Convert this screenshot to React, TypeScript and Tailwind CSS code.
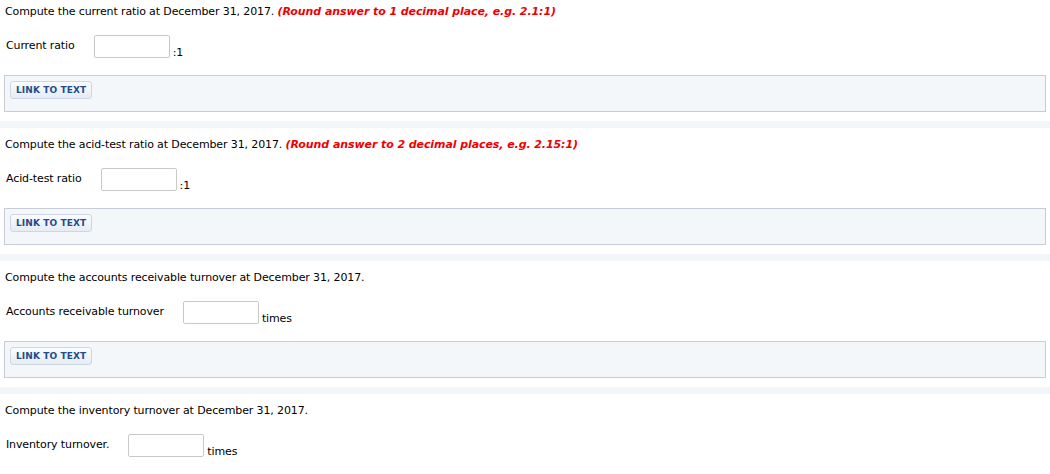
import React from 'react';

type Question = {
  prompt: string;
  hint?: string;
  label: string;
  suffix: string;
  link: boolean;
};

const questions: Question[] = [
  {
    prompt: 'Compute the current ratio at December 31, 2017.',
    hint: '(Round answer to 1 decimal place, e.g. 2.1:1)',
    label: 'Current ratio',
    suffix: ':1',
    link: true,
  },
  {
    prompt: 'Compute the acid-test ratio at December 31, 2017.',
    hint: '(Round answer to 2 decimal places, e.g. 2.15:1)',
    label: 'Acid-test ratio',
    suffix: ':1',
    link: true,
  },
  {
    prompt: 'Compute the accounts receivable turnover at December 31, 2017.',
    label: 'Accounts receivable turnover',
    suffix: 'times',
    link: true,
  },
  {
    prompt: 'Compute the inventory turnover at December 31, 2017.',
    label: 'Inventory turnover.',
    suffix: 'times',
    link: false,
  },
];

const QuestionBlock: React.FC<{ q: Question; first: boolean }> = ({ q, first }) => (
  <div>
    {!first && <div className="h-[7px] bg-[#f3f6f9] mt-[9px]" />}
    <p className={`px-[5px] leading-[14px] ${first ? 'pt-[5px]' : 'pt-[10px]'}`}>
      {q.prompt}{' '}
      {q.hint && <span className="font-bold italic tracking-[-0.08px] text-[#ee0000]">{q.hint}</span>}
    </p>
    <div className="flex items-center pl-[6px] mt-[16px]">
      <span className="pr-[19px]">{q.label}</span>
      <div className="flex items-end">
        <input
          type="text"
          className="w-[76px] h-[23px] border border-[#c9c9c9] rounded-[2px] bg-white outline-none"
        />
        <span className="ml-[3px] leading-[12px] mb-[-1px]">{q.suffix}</span>
      </div>
    </div>
    {q.link && (
      <div className="mx-[4px] mt-[17px] h-[37px] border border-[#c6cdd8] bg-[#f4f7fa] pl-[5px] pt-[5px]">
        <button className="h-[18px] px-[5px] rounded-[3px] border border-[#cdd6e2] bg-gradient-to-b from-[#fbfcfe] to-[#e6ecf4] text-[9px] font-bold leading-none tracking-[0.1px] text-[#234c8c]">
          LINK TO TEXT
        </button>
      </div>
    )}
  </div>
);

export default function App() {
  return (
    <div className="w-[1050px] h-[474px] overflow-hidden bg-white text-black text-[11px] tracking-[-0.12px] font-['DejaVu_Sans',Verdana,sans-serif]">
      {questions.map((q, i) => (
        <QuestionBlock key={i} q={q} first={i === 0} />
      ))}
    </div>
  );
}
